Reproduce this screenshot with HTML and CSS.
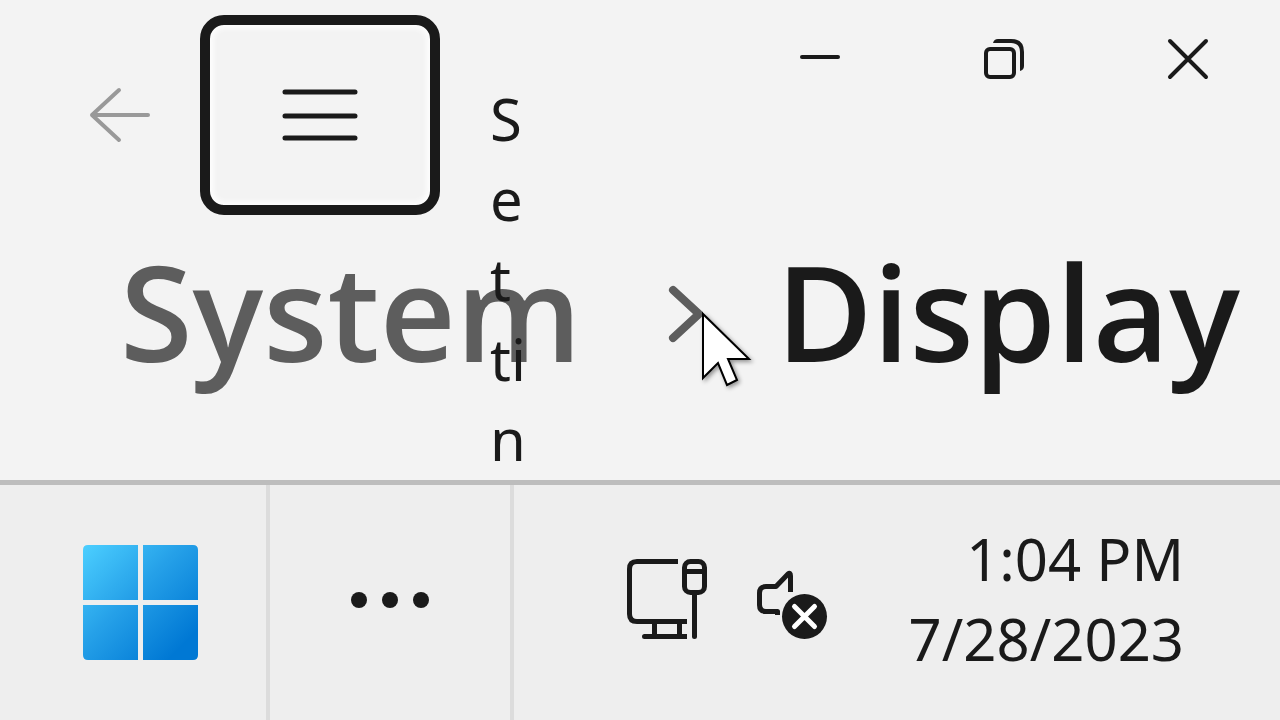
FILE: index.html
```
<!DOCTYPE html>
<html lang="en">
<head>
  <meta charset="UTF-8">
  <meta name="viewport" content="width=device-width, initial-scale=1">
  <title>System - Display</title>
  <link rel="stylesheet" href="styles.css">
</head>
<body>

  <main class="window">
    <header class="titlebar">
      <button class="back" type="button" aria-label="Back" disabled>
        <svg width="64" height="56" viewBox="0 0 64 56">
          <path d="M31 3L4 28L31 53M4 28H60"/>
        </svg>
      </button>
      <button class="menu" type="button" aria-label="Open navigation">
        <svg width="80" height="56" viewBox="0 0 80 56">
          <path d="M5 5H75M5 29H75M5 51H75"/>
        </svg>
      </button>
      <span class="app-name">Settin</span>

      <div class="caption">
        <button type="button" aria-label="Minimize">
          <svg width="44" height="44" viewBox="0 0 44 44"><path d="M4 20H40"/></svg>
        </button>
        <button type="button" aria-label="Restore">
          <svg width="44" height="44" viewBox="0 0 44 44">
            <rect x="4" y="12" width="28" height="28" rx="4"/>
            <path class="behind" d="M11 6Q12 2 16 2H29Q42 2 42 15V29Q42 33 38 34V15Q38 6 29 6Z"/>
          </svg>
        </button>
        <button type="button" aria-label="Close">
          <svg width="44" height="44" viewBox="0 0 44 44"><path d="M4 4L40 40M40 4L4 40"/></svg>
        </button>
      </div>
    </header>

    <nav class="breadcrumb" aria-label="Breadcrumb">
      <a href="#system">System</a>
      <svg class="chevron" width="44" height="64" viewBox="0 0 44 64">
        <path d="M8 8L34 32L8 56"/>
      </svg>
      <h1>Display</h1>
    </nav>

    <!-- mouse pointer -->
    <svg class="pointer" width="56" height="80" viewBox="0 0 56 80">
      <path d="M3 3V67L18 52L27 74L37 69L28 48H49Z"/>
    </svg>
  </main>

  <footer class="taskbar">
    <button class="start" type="button" aria-label="Start">
      <svg width="115" height="115" viewBox="0 0 115 115">
        <defs>
          <linearGradient id="pane" gradientUnits="userSpaceOnUse" x1="0" y1="0" x2="100" y2="100">
            <stop offset="0" stop-color="#4ccfff"/>
            <stop offset="0.5" stop-color="#25a0e8"/>
            <stop offset="1" stop-color="#0078d4"/>
          </linearGradient>
        </defs>
        <path fill="url(#pane)" d="M5 0H55V55H0V5Q0 0 5 0ZM60 0H110Q115 0 115 5V55H60ZM0 60H55V115H5Q0 115 0 110ZM60 60H115V110Q115 115 110 115H60Z"/>
      </svg>
    </button>

    <button class="more" type="button" aria-label="More apps">
      <svg width="80" height="16" viewBox="0 0 80 16">
        <circle cx="9" cy="8" r="8"/>
        <circle cx="40" cy="8" r="8"/>
        <circle cx="71" cy="8" r="8"/>
      </svg>
    </button>

    <div class="tray">
      <button class="status" type="button" aria-label="Network and volume">
        <svg width="81" height="82" viewBox="0 0 81 82">
          <path d="M51 3.500H10Q2.500 3.500 2.500 11V56Q2.500 63.500 10 63.500H60M27.500 64V78M52.500 64V78M30 78.500H60"/>
          <rect x="57.500" y="3.500" width="20" height="31" rx="6"/>
          <path d="M58 13.500H77"/>
          <path class="round" d="M67.500 35V78.500M17.500 78.500H50"/>
        </svg>
        <svg width="72" height="82" viewBox="0 0 72 82">
          <path d="M20.500 57V53.500H9Q2.500 53.500 2.500 47V35Q2.500 28.500 9 28.500H19L31 16Q33.500 14 33.500 18V34"/>
          <circle cx="47.500" cy="58.500" r="22.500"/>
          <path class="round cross" d="M37.500 48.500L57.500 68.500M57.500 48.500L37.500 68.500"/>
        </svg>
      </button>
      <button class="clock" type="button">
        <time datetime="13:04">1:04 PM</time>
        <time datetime="2023-07-28">7/28/2023</time>
      </button>
    </div>
  </footer>

</body>
</html>
```
FILE: styles.css
```
* {
  box-sizing: border-box;
}

body {
  margin: 0;
  min-height: 100vh;
  display: flex;
  flex-direction: column;
  background: #f3f3f3;
  color: #1a1a1a;
  font-family: "Noto Sans", "Open Sans", sans-serif;
  overflow: hidden;
}

button {
  display: flex;
  align-items: center;
  justify-content: center;
  padding: 0;
  border: 0;
  background: none;
  color: inherit;
  font: inherit;
}

svg {
  flex: none;
  fill: none;
  stroke: currentColor;
  stroke-linecap: round;
  stroke-linejoin: round;
}

/* settings window */
.window {
  flex: 1;
  position: relative;
}

.titlebar {
  position: relative;
  display: flex;
  align-items: flex-start;
  padding-top: 15px;
}

.back {
  width: 160px;
  height: 200px;
  margin-left: 40px;
  color: #999;
  stroke-width: 4px;
}

.menu {
  width: 240px;
  height: 200px;
  border: 10px solid #1a1a1a;
  border-radius: 24px;
  box-shadow: inset 0 0 4px 4px #fcfcfc;
  stroke-width: 5px;
}

/* too narrow for the name, so it breaks after each letter and runs down over the breadcrumb */
.app-name {
  position: absolute;
  top: 79px;
  left: 490px;
  z-index: 1;
  width: 40px;
  font-size: 58px;
  line-height: 80px;
  word-break: break-all;
}

.caption {
  display: flex;
  margin-left: auto;
  stroke-width: 4px;
}

.caption button {
  width: 184px;
  height: 88px;
}

.caption .behind {
  fill: currentColor;
  stroke: none;
}

.breadcrumb {
  display: flex;
  align-items: center;
  justify-content: space-between;
  padding: 12px 40px 0 120px;
  font-family: "Open Sans", "Noto Sans", sans-serif;
  font-size: 132px;
  font-weight: 600;
  line-height: 168px;
}

.breadcrumb a {
  color: #5d5d5d;
  text-decoration: none;
}

.breadcrumb h1 {
  margin: 0;
  font: inherit;
}

.chevron {
  margin: 6px 0 0 16px;
  color: #5d5d5d;
  stroke-width: 8px;
}

.pointer {
  position: absolute;
  top: 311px;
  left: 700px;
  color: #000;
  fill: #fff;
  stroke-width: 2px;
  stroke-linejoin: miter;
  filter: drop-shadow(2px 2px 2px rgba(0, 0, 0, 0.4));
}

/* taskbar */
.taskbar {
  position: relative;
  display: flex;
  min-height: 240px;
  border-top: 5px solid #bdbdbd;
  background: #eee;
}

.start,
.more {
  border-right: 4px solid #dcdcdc;
}

.start {
  width: 270px;
  padding-left: 14px;
}

.start svg {
  stroke: none;
}

.more {
  width: 244px;
  padding-bottom: 5px;
}

.more svg {
  fill: currentColor;
  stroke: none;
}

.tray {
  flex: 1;
  display: flex;
  align-items: center;
  justify-content: flex-end;
  gap: 80px;
  padding: 0 96px 8px 0;
}

.status {
  gap: 49px;
  stroke-width: 5px;
}

.status svg {
  stroke-linecap: butt;
}

.status .round {
  stroke-linecap: round;
}

.status circle {
  fill: currentColor;
  stroke: none;
}

.status .cross {
  stroke: #fff;
}

.clock {
  flex-direction: column;
  align-items: flex-end;
  font-size: 58px;
  line-height: 80px;
}
```
